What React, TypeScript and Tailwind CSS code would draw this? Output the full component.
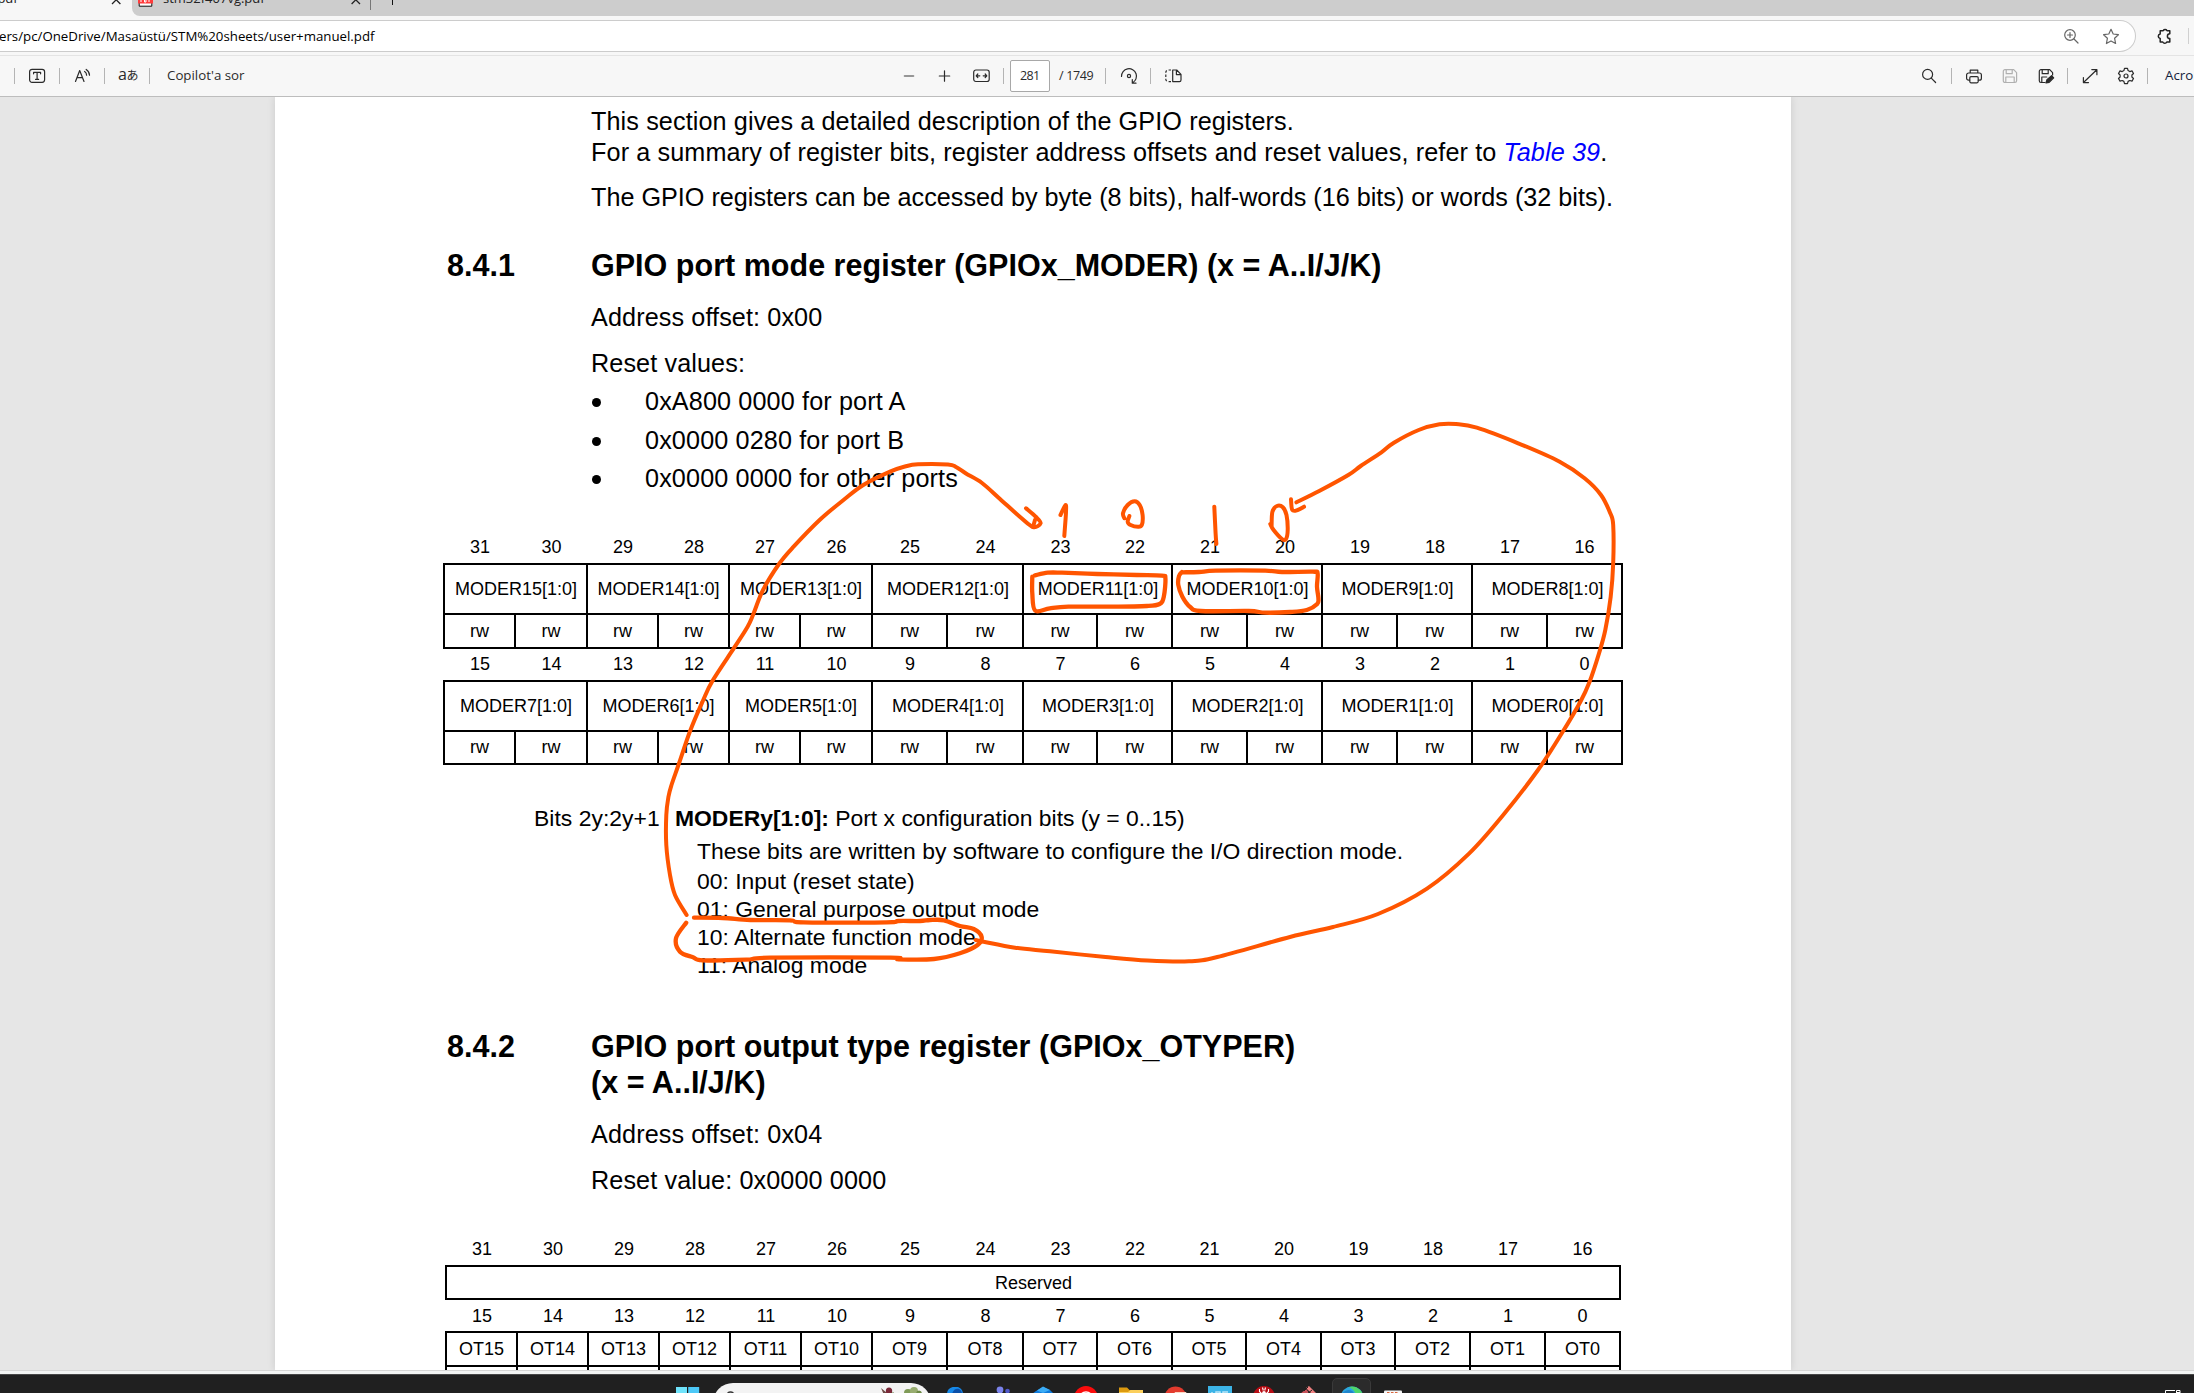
import React from "react";

type Pt = [number, number];

/** Catmull-Rom interpolation through the sampled pen positions. */
function smooth(points: Pt[]): string {
  let d = `M${points[0][0]} ${points[0][1]}`;
  for (let i = 0; i < points.length - 1; i++) {
    const p0 = points[i - 1] ?? points[i];
    const p1 = points[i];
    const p2 = points[i + 1];
    const p3 = points[i + 2] ?? p2;
    const c1 = [p1[0] + (p2[0] - p0[0]) / 6, p1[1] + (p2[1] - p0[1]) / 6];
    const c2 = [p2[0] - (p3[0] - p1[0]) / 6, p2[1] - (p3[1] - p1[1]) / 6];
    d += `C${c1[0]} ${c1[1]} ${c2[0]} ${c2[1]} ${p2[0]} ${p2[1]}`;
  }
  return d;
}

const strokes: { w: number; p: Pt[] }[] = [
  { w: 4, p: [[686.6, 915], [675, 895], [670, 875], [666.3, 845], [666.3, 815], [668.4, 797], [671.5, 785], [678.8, 764], [690.2, 730.7], [702.5, 701.7], [712.4, 681], [734.2, 647.7], [747.6, 626.7], [753.4, 614], [763, 590], [779, 564], [793.6, 546.7], [820.4, 519.3], [843.5, 500], [863.3, 485], [890, 471.7], [905, 466.5], [918, 464.3], [948, 464.5], [956, 467], [966, 473.5], [982, 483], [1000, 499], [1020.7, 517.5], [1033, 527], [1040.6, 523.3], [1036, 517], [1026, 508.3]] },
  { w: 4, p: [[1033, 527], [1035, 520]] },
  { w: 4, p: [[1060.5, 515], [1065.5, 505], [1066, 512], [1065, 526.7], [1064.3, 536]] },
  { w: 4, p: [[1124.4, 518.3], [1123, 513.3], [1127.7, 505], [1134.7, 501.3], [1139.7, 505], [1142.6, 515], [1141.8, 525], [1138, 526.7], [1130.6, 525], [1127.7, 521.7], [1129.4, 516]] },
  { w: 4, p: [[1214.3, 506.7], [1215.6, 533.3], [1216.4, 544]] },
  { w: 4, p: [[1271.6, 526], [1272.4, 511.7], [1277, 506], [1282.8, 507.3], [1286.5, 515], [1287.7, 530], [1286, 539], [1282, 539], [1273.6, 530], [1270.3, 524]] },
  { w: 4, p: [[1291, 499.3], [1292.3, 510], [1297.7, 510], [1304, 506.7]] },
  { w: 4, p: [[1296.4, 502.3], [1319.2, 491], [1348.3, 475], [1360.7, 466], [1381.4, 452.3], [1393.9, 442.7], [1418.7, 430], [1439.5, 424.3], [1456, 424], [1476.8, 427.7], [1518.2, 443.3], [1559.7, 461.7], [1584.6, 478.3], [1601, 495], [1610.3, 513.3], [1613.2, 525], [1613.2, 563.3], [1610.7, 596.7], [1605.3, 630], [1599, 653.3], [1589.6, 681.7], [1580.4, 701.7], [1561.8, 733.3], [1538, 770], [1504, 814], [1469, 853.6], [1427, 888.6], [1378, 914], [1333, 927], [1290, 937], [1217.4, 957], [1189, 961.3], [1147.5, 960.5], [1105.5, 957], [1050, 951.3], [1015, 947.7], [983.6, 941.7], [975.7, 940]] },
  { w: 4.3, p: [[1032.3, 576.7], [1032.3, 593.3], [1035.2, 610.7], [1049.8, 608.3], [1068.4, 606.7], [1112, 606.7], [1147, 606], [1159.6, 604], [1163.8, 596.7], [1165.4, 578.3], [1161.7, 575.7], [1136.8, 575], [1097.4, 574], [1062, 572.7], [1047.7, 572.7], [1035, 575.3]] },
  { w: 4.3, p: [[1182, 572], [1179, 576], [1178.3, 585], [1182.4, 596.7], [1189.9, 606.7], [1201, 611], [1248.8, 611], [1265.3, 612.7], [1290.2, 612], [1306.8, 610], [1317.2, 604], [1318.4, 598.3], [1317, 586.7], [1317.6, 573.3], [1313, 571.7], [1282, 572], [1265.3, 570.7], [1215.6, 570.7], [1199, 572], [1183, 572.3]] },
  { w: 4.3, p: [[694, 917.7], [722.6, 918], [750.3, 920], [789.8, 920.3], [803.7, 922.3], [886.7, 922.3], [898.6, 921], [920, 921], [930, 920], [944, 920.3], [959.9, 926], [973.7, 929], [981.6, 936.7], [977.6, 945], [959.9, 953.3], [934, 959], [898.6, 959.3], [890.7, 957.7], [770, 957.7], [746.3, 959.7], [702.8, 960.3], [693, 957.3], [680, 951.7], [676, 938.3], [686.2, 922.7]] },
];

function Ink() {
  return (
    <svg className="pointer-events-none absolute left-0 top-0" width="2194" height="1393" viewBox="0 0 2194 1393" fill="none" stroke="#ff5500" strokeLinecap="round" strokeLinejoin="round">
      {strokes.map((s, i) => (
        <path key={i} d={smooth(s.p)} strokeWidth={s.w} />
      ))}
    </svg>
  );
}

/* ---------- browser chrome ---------- */

function Ico({ children, className = "", w = 18, h = 18, color = "#2b2b2b" }: { children: React.ReactNode; className?: string; w?: number; h?: number; color?: string }) {
  return (
    <svg className={`shrink-0 ${className}`} width={w} height={h} viewBox={`0 0 ${w} ${h}`} fill="none" stroke={color} strokeWidth="1.2" strokeLinecap="round" strokeLinejoin="round">
      {children}
    </svg>
  );
}

const Sep = ({ className = "" }: { className?: string }) => <div className={`h-4 w-px shrink-0 bg-[#b4b4b4] ${className}`} />;

function TabStrip() {
  return (
    <div className="flex h-4 shrink-0 overflow-hidden">
      <div className="flex h-4 w-[132px] justify-between">
        <span className="-mt-[12px] -ml-[6px] text-[13px] leading-[20px] text-[#222]">.pdf</span>
        <svg className="mr-[11px]" width="10" height="5" viewBox="0 0 10 5" fill="none" stroke="#222" strokeWidth="1.3">
          <path d="M1 4 5.2 -.2 9.4 4" />
        </svg>
      </div>
      <div className="flex h-4 flex-1 items-start rounded-bl-lg bg-[#cdcdcd]">
        <svg className="ml-[6px]" width="15" height="8" viewBox="0 0 15 8">
          <path d="M1.200 0h12.600v6.200h-12.600z" fill="#fff" stroke="#111" />
          <path d="M0 0h15v3.500h-15z" fill="#ff3b3b" />
          <path d="M3 0v2M6.500 0v2h1.500v-2M11 0v2" stroke="#fff" fill="none" />
        </svg>
        <span className="-mt-[12px] ml-[10px] w-[188px] text-[13px] leading-[20px] text-[#222]">stm32f407vg.pdf</span>
        <svg width="10" height="5" viewBox="0 0 10 5" fill="none" stroke="#222" strokeWidth="1.3">
          <path d="M.6 4 4.800 -.2 9 4" />
        </svg>
        <div className="ml-[9px] h-[10px] w-px bg-[#777]" />
        <div className="ml-[21px] h-[5px] w-px bg-[#111]" />
      </div>
    </div>
  );
}

function AddressRow() {
  return (
    <div className="flex h-10 shrink-0 items-start border-b border-[#e4e4e4] pt-1">
      <div className="flex h-8 w-[2136px] items-center rounded-r-full border border-l-0 border-[#cccccc] bg-white">
        <span className="-ml-px w-[2065px] whitespace-pre text-[13.27px] leading-5 text-black">ers/pc/OneDrive/Masaüstü/STM%20sheets/user+manuel.pdf</span>
        <Ico w={15} h={15} color="#666">
          <circle cx="6" cy="6" r="5.300" />
          <path d="M10 10 14 14M3.500 6h5M6 3.500v5" />
        </Ico>
        <Ico className="ml-[23px]" w={18} h={17} color="#666">
          <path d="M9 1.300 11.200 6 16.400 6.700 12.600 10.300 13.600 15.500 9 12.900 4.400 15.500 5.400 10.300 1.600 6.700 6.800 6Z" />
        </Ico>
      </div>
      <Ico className="mt-2 ml-[20px]" w={16} h={17} color="#222">
        <path strokeWidth="1.500" d="M4.200 2.700H7.200A2.200 2.200 0 0 1 11 2.700H13.800V5.800A2.400 2.400 0 0 0 13.800 10.600V14H10.800A2.200 2.200 0 0 1 6.800 14H4.200V10.600A2.400 2.400 0 0 1 4.200 5.900Z" />
      </Ico>
      <div className="ml-4 mt-2 h-4 w-px bg-[#d0d0d0]" />
    </div>
  );
}

function Toolbar() {
  return (
    <div className="flex h-[41px] shrink-0 items-center overflow-hidden border-b border-[#bdbdbd] text-[13.3px] text-[#2b2b2b]">
      <div className="flex w-[903px] shrink-0 items-center">
        <Sep className="ml-[14px]" />
        <Ico className="ml-[13px]">
          <rect x="1.600" y="2.300" width="15" height="13" rx="2.500" />
          <path d="M5.600 6.800V5.400h7v1.400M9.100 5.400v7M7.600 12.400h3" />
        </Ico>
        <Sep className="ml-[13px]" />
        <Ico className="ml-[14px]">
          <path d="M1.500 14.500 5.700 3.500 10 14.500M3 10.700h5.500M10.600 4.500c1.400.9 2 2 2 3.700M12.200 2.400c2.200 1.400 3.300 3 3.300 5.800" />
        </Ico>
        <Sep className="ml-[12px]" />
        <span className="-mt-[3px] ml-[13px] w-[20px] whitespace-nowrap text-[16px] leading-5 tracking-[-0.5px]">
          a<span className="font-['Noto_Sans_CJK_JP'] text-[12px]">あ</span>
        </span>
        <Sep className="ml-[11px]" />
        <span className="ml-[17px] -mt-px">Copilot&apos;a sor</span>
      </div>
      <div className="flex w-[1018px] shrink-0 items-center">
        <Ico w={12} color="#777"><path strokeWidth="1.600" d="M1.500 9h9" /></Ico>
        <Ico className="ml-[22px]" w={14}><path d="M7.500 3.800v10.400M2.300 9h10.400" /></Ico>
        <Ico className="ml-[21px]" w={19}>
          <rect x="1.700" y="3" width="15.500" height="11.500" rx="2.200" />
          <path d="M7.800 8.800H4.300M5.800 7 4.200 8.800 5.800 10.500M11.200 8.800h3.500M13.200 7l1.600 1.800-1.600 1.700" />
        </Ico>
        <Sep className="ml-[12px]" />
        <div className="ml-[6px] flex h-8 w-10 shrink-0 items-center rounded-[2px] border border-[#a8a8a8] bg-white pl-[9px] text-[12.500px] tracking-[-0.7px]">281</div>
        <span className="ml-[9px] w-[46px] shrink-0 whitespace-nowrap text-[12.5px] tracking-[-0.35px]">/ 1749</span>
        <Sep />
        <Ico className="ml-[14px]">
          <path d="M1.500 9.500A7.500 7.500 0 1 1 12.500 15.800M12.300 12.600V16.200H16" />
          <circle cx="9" cy="9" r="1.600" />
        </Ico>
        <Sep className="ml-[12px]" />
        <Ico className="ml-[13px]">
          <path d="M7 3H4.200A2.400 2.400 0 0 0 1.800 5.400v6.800A2.400 2.400 0 0 0 4.200 14.600H7" strokeDasharray="2.400 1.800" strokeLinecap="butt" />
          <path d="M8.700 3h4L17 7.400v5.600a1.600 1.600 0 0 1-1.600 1.600H8.700ZM12.400 3v4.600H17" />
        </Ico>
      </div>
      <Ico w={16}><circle cx="6.600" cy="7.400" r="5" /><path d="M10.300 11.200 14.600 15.500" /></Ico>
      <Sep className="ml-[14px]" />
      <Ico className="ml-[13px]">
        <path d="M5.200 6V3.200h7.600V6M4.600 13.200H3.600a2 2 0 0 1-2-2V8a2 2 0 0 1 2-2h10.800a2 2 0 0 1 2 2v3.200a2 2 0 0 1-2 2h-1" />
        <rect x="4.800" y="9.600" width="8.400" height="6.200" rx="1.200" />
      </Ico>
      <Ico className="ml-[18px]" color="#b0b0b0">
        <path d="M2.300 4.400A1.700 1.700 0 0 1 4 2.700h8.700L15.600 5.600v8.200a1.700 1.700 0 0 1-1.700 1.700H4a1.700 1.700 0 0 1-1.700-1.700ZM5.200 2.700v4h6v-4M4.800 15.300V10h8.400v5.300" />
      </Ico>
      <Ico className="ml-[18px]">
        <path d="M8 15.500H4a1.700 1.700 0 0 1-1.700-1.700V4.400A1.700 1.700 0 0 1 4 2.700h8.700L15.600 5.600V8M5.200 2.700v4h6v-4M4.800 15.300V10h5" />
        <path d="M9 15.800 10 12.600 14.600 8.600 16.700 10.800 12.200 15.300Z" fill="#2b2b2b" />
      </Ico>
      <Sep className="ml-[12px]" />
      <Ico className="ml-[13px]">
        <path d="M2.500 15.500 15.800 2.700M10.800 2.600h5.100v5.100M7.500 15.600H2.400v-5" />
      </Ico>
      <Ico className="ml-[18px]">
        <path d="M7.500 1.400h3l.6 2.200 1.700 1 2.200-.7 1.500 2.600-1.600 1.500v2l1.600 1.500-1.500 2.600-2.200-.6-1.700.9-.6 2.200h-3l-.6-2.200-1.700-.9-2.200.6-1.500-2.600L3.100 10V8L1.500 6.500 3 3.900l2.200.7 1.700-1Z" />
        <circle cx="9" cy="9" r="2" />
      </Ico>
      <Sep className="ml-[12px]" />
      <span className="ml-[17px] shrink-0 whitespace-nowrap text-[#14233c]">Acro</span>
    </div>
  );
}

/* ---------- document ---------- */

const GRID_A = "grid grid-cols-[71px_72px_71px_71px_71px_72px_75px_76px_74px_75px_75px_75px_75px_75px_75px_77px]";
const GRID_B = "grid grid-cols-[71px_71px_71px_71px_71px_71px_75px_76px_74px_75px_74px_75px_74px_75px_75px_77px]";
const range = (from: number, n: number) => Array.from({ length: n }, (_, i) => from - i);

function BitNumbers({ from, grid, className = "" }: { from: number; grid: string; className?: string }) {
  return (
    <div className={`${grid} ${className}`}>
      {range(from, 16).map((n) => (
        <span key={n} className="h-6 pl-[3px] text-center leading-6 last:pl-0">{n}</span>
      ))}
    </div>
  );
}

function Fields({ from, rw }: { from: number; rw: string }) {
  return (
    <div>
      <div className={`${GRID_A} h-[50px] border-t-2 border-black`}>
        {range(from, 8).map((n) => (
          <span key={n} className="col-span-2 border-l-2 border-black pl-px text-center leading-[48px] last:border-r-2">{`MODER${n}[1:0]`}</span>
        ))}
      </div>
      <div className={`${GRID_A} border-y-2 border-black ${rw}`}>
        {range(16, 16).map((n) => (
          <span key={n} className="flex items-center justify-center border-l-2 border-black last:border-r-2">rw</span>
        ))}
      </div>
    </div>
  );
}

const Body = ({ children, className = "tracking-[0.11px]" }: { children: React.ReactNode; className?: string }) => (
  <p className={`pl-[316px] text-[25.2px] leading-[30px] whitespace-pre ${className}`}>{children}</p>
);

function Heading({ num, children, className = "" }: { num: string; children: React.ReactNode; className?: string }) {
  return (
    <h2 className={`flex pl-[172px] text-[30.5px] leading-9 font-bold tracking-[0.02px] ${className}`}>
      <span className="w-[144px]">{num}</span>
      <span>{children}</span>
    </h2>
  );
}

function Bullet({ children, className = "" }: { children: React.ReactNode; className?: string }) {
  return (
    <li className={`flex items-center pl-[317px] text-[25.2px] leading-[30px] tracking-[0.13px] ${className}`}>
      <span className="mt-[2px] mr-[44px] size-[9px] rounded-full bg-black" />
      {children}
    </li>
  );
}

function Page() {
  return (
    <div className="h-full w-[1516px] shrink-0 overflow-hidden bg-white pt-[9px] font-['Liberation_Sans',Arial,sans-serif] text-black shadow-[0_0_8px_rgba(0,0,0,0.12)]">
      <Body>This section gives a detailed description of the GPIO registers.</Body>
      <Body className="mt-px tracking-[0.12px]">
        For a summary of register bits, register address offsets and reset values, refer to <em className="text-[#0000ff]">Table 39</em>.
      </Body>
      <Body className="mt-[15px]">The GPIO registers can be accessed by byte (8 bits), half-words (16 bits) or words (32 bits).</Body>

      <Heading num="8.4.1" className="mt-[35px]">GPIO port mode register (GPIOx_MODER) (x = A..I/J/K)</Heading>
      <Body className="mt-[19px] tracking-[0.11px]">Address offset: 0x00</Body>
      <Body className="mt-4 tracking-[0.11px]">Reset values:</Body>
      <ul>
        <Bullet className="mt-2">0xA800 0000 for port A</Bullet>
        <Bullet className="mt-[9px]">0x0000 0280 for port B</Bullet>
        <Bullet className="mt-2">0x0000 0000 for other ports</Bullet>
      </ul>

      <div className="mt-[42px] ml-[168px] w-[1180px] text-[18px]">
        <BitNumbers from={31} grid={GRID_A} className="mb-1" />
        <Fields from={15} rw="h-9" />
        <BitNumbers from={15} grid={GRID_A} className="mt-[3px] mb-1" />
        <Fields from={7} rw="h-[35px]" />
      </div>

      <div className="mt-[39px] flex pl-[259px] text-[22.9px] leading-7 whitespace-nowrap">
        <span className="w-[141px] tracking-[0.03px]">Bits 2y:2y+1</span>
        <div>
          <p><b>MODERy[1:0]:</b> Port x configuration bits (y = 0..15)</p>
          <div className="pl-[22px]">
            <p className="mt-[5px] mb-[2px]">These bits are written by software to configure the I/O direction mode.</p>
            <p>00: Input (reset state)</p>
            <p>01: General purpose output mode</p>
            <p>10: Alternate function mode</p>
            <p>11: Analog mode</p>
          </div>
        </div>
      </div>

      <Heading num="8.4.2" className="mt-[49px]">
        GPIO port output type register (GPIOx_OTYPER)
        <br />
        (x = A..I/J/K)
      </Heading>
      <Body className="mt-[19px] tracking-[0.11px]">Address offset: 0x04</Body>
      <Body className="mt-4 tracking-[0.11px]">Reset value: 0x0000 0000</Body>

      <div className="mt-[42px] ml-[170px] w-[1176px] text-[18px]">
        <BitNumbers from={31} grid={GRID_B} className="mb-1" />
        <div className="h-[35px] border-2 border-black pl-px text-center leading-8">Reserved</div>
        <BitNumbers from={15} grid={GRID_B} className="mt-1 mb-[3px]" />
        <div className={`${GRID_B} h-[34px] border-t-2 border-black`}>
          {range(15, 16).map((n) => (
            <span key={n} className="border-l-2 border-black text-center leading-8 last:border-r-2">{`OT${n}`}</span>
          ))}
        </div>
        <div className={`${GRID_B} h-[34px] border-t-2 border-black`}>
          {range(15, 16).map((n) => (
            <span key={n} className="border-l-2 border-black last:border-r-2" />
          ))}
        </div>
      </div>
    </div>
  );
}

/* ---------- taskbar ---------- */

function Tile({ w, children, className = "" }: { w: number; children: React.ReactNode; className?: string }) {
  return (
    <svg className={`mt-[11px] shrink-0 ${className}`} width={w} height="8" viewBox={`0 0 ${w} 8`}>
      {children}
    </svg>
  );
}

function Taskbar() {
  return (
    <div className="flex h-[19px] shrink-0 items-start overflow-hidden border-t border-[#484848] bg-[#202020]">
      <Tile w={24} className="ml-[676px]">
        <path d="M0 1h11v7H0z" fill="#6fe3fb" />
        <path d="M12.200 1h11v7h-11z" fill="#4cc8f7" />
      </Tile>
      <div className="mt-2 ml-[13px] flex h-10 w-[218px] items-start rounded-full bg-[#f3f3f3]">
        <svg className="mt-2 ml-[12px]" width="12" height="10" viewBox="0 0 12 10" fill="none" stroke="#333" strokeWidth="1.500">
          <circle cx="5.500" cy="5" r="4" />
        </svg>
        <svg className="mt-1 ml-[143px]" width="44" height="8" viewBox="0 0 44 8">
          <path d="M1 1 7 6 9 1 12 6 11 8H4Z" fill="#6d4a46" />
          <ellipse cx="9" cy="4" rx="3.200" ry="3.500" fill="#7a2838" />
          <path d="M6 8 14 5 12 8Z" fill="#56763a" />
          <ellipse cx="28" cy="6" rx="4" ry="4" fill="#7f9b57" />
          <ellipse cx="34" cy="4" rx="4" ry="4" fill="#98ad70" />
          <ellipse cx="39" cy="7" rx="3" ry="3.500" fill="#6d8a45" />
        </svg>
      </div>
      <Tile w={18} className="ml-[15px]">
        <path d="M1 8C1 4 4 1 8 1h4c3 1 5 4 5 7Z" fill="#1689e8" />
        <path d="M6 8c1-4 4-6 7-5 2 1 3 3 3 5Z" fill="#0a4fa8" />
      </Tile>
      <Tile w={24} className="ml-[23px]">
        <circle cx="13" cy="4" r="3.400" fill="#7b83eb" />
        <circle cx="20.500" cy="5" r="2.300" fill="#5059c9" />
        <path d="M0 7h12v1H0zM16 8h8V7.500h-8z" fill="#5059c9" />
      </Tile>
      <Tile w={24} className="ml-[20px]">
        <path d="M1 8 5 5 12 1 19 4 23 8Z" fill="#0f7bdc" />
        <path d="M6 4.500 12 .5 19 4 12 7Z" fill="#3aabf5" />
      </Tile>
      <Tile w={24} className="ml-[19px]">
        <circle cx="12" cy="12" r="12" fill="#fb0c0c" />
        <path d="M6.500 9.500A6 6 0 0 1 17.500 9.500" fill="none" stroke="#fff" strokeWidth="1.500" />
      </Tile>
      <Tile w={24} className="ml-[21px]">
        <path d="M0 1.500h8l2.500 2.500H12V8H0Z" fill="#dc9a10" />
        <path d="M0 6h9l2.500-2H24v4H0Z" fill="#fbcf5c" />
      </Tile>
      <Tile w={23} className="ml-[21px]">
        <circle cx="11.500" cy="11.500" r="11" fill="#e33b2e" />
        <path d="M11 6h11l1 2H10Z" fill="#fbd7c4" />
      </Tile>
      <Tile w={24} className="ml-[21px]">
        <path d="M0 0h24v8H0z" fill="#3cb4e7" />
        <path d="M4 6v2M8 8V6h4v2M15 8V6h5" stroke="#b9e5f7" fill="none" strokeWidth="1.500" />
      </Tile>
      <Tile w={22} className="ml-[21px]">
        <circle cx="11" cy="11" r="11" fill="#b80d14" />
        <path d="M6.500 3v2.500l2 2M15.500 3v2.500l-2 2M9.500 1.500l.8 3M12.500 1.500l-.8 3" stroke="#fff" fill="none" strokeWidth="1.100" />
        <ellipse cx="11" cy="7.500" rx="2" ry="2.500" fill="#fff" />
      </Tile>
      <Tile w={19} className="ml-[24px]">
        <path d="M7 2 10 0 18 8H13Z" fill="#f08080" />
        <path d="M1 8 7 3 11 8Z" fill="#c8525a" />
        <path d="M5 5 9 1M8 8l5-4" stroke="#202020" strokeWidth="1" />
      </Tile>
      <div className="mt-[3px] ml-[14px] flex h-10 w-[39px] items-start justify-center rounded-[5px] border border-[#3a3a3a] bg-[#2b2b2b]">
        <svg className="mt-[7px]" width="24" height="9" viewBox="0 0 24 9">
          <circle cx="12" cy="12" r="11.500" fill="#2ba7df" />
          <path d="M12 .5A11.500 11.500 0 0 1 23 9H15C16 5 12 3 9 1Z" fill="#4fd66a" />
          <path d="M1 9C4 4 9 3 12 5c2 1 2 3 2 4Z" fill="#1e84cc" />
        </svg>
      </div>
      <Tile w={18} className="ml-[13px]">
        <rect x="0" y="4.500" width="18" height="8" rx="1" fill="#f4f4f4" />
        <path d="M3 7h12" stroke="#d9653b" strokeWidth="1.800" strokeDasharray="2.500 1.500" />
      </Tile>
      <Tile w={18} className="ml-[762px]">
        <path d="M1.500 8V4.500H11M12.500 8V4.500h3.500V8M12.500 6.500h3.500" stroke="#fff" fill="none" />
      </Tile>
    </div>
  );
}

export default function App() {
  return (
    <div className="relative flex h-[1393px] w-[2194px] flex-col overflow-hidden bg-[#f7f7f7] font-['Open_Sans','Noto_Sans',sans-serif]">
      <TabStrip />
      <AddressRow />
      <Toolbar />
      <main className="h-[1273px] shrink-0 overflow-hidden bg-[#e6e6e6] pl-[275px]">
        <Page />
      </main>
      <div className="h-1 shrink-0 border-t border-[#d6d6d6] bg-[#f2f4f3]" />
      <Taskbar />
      <Ink />
    </div>
  );
}
